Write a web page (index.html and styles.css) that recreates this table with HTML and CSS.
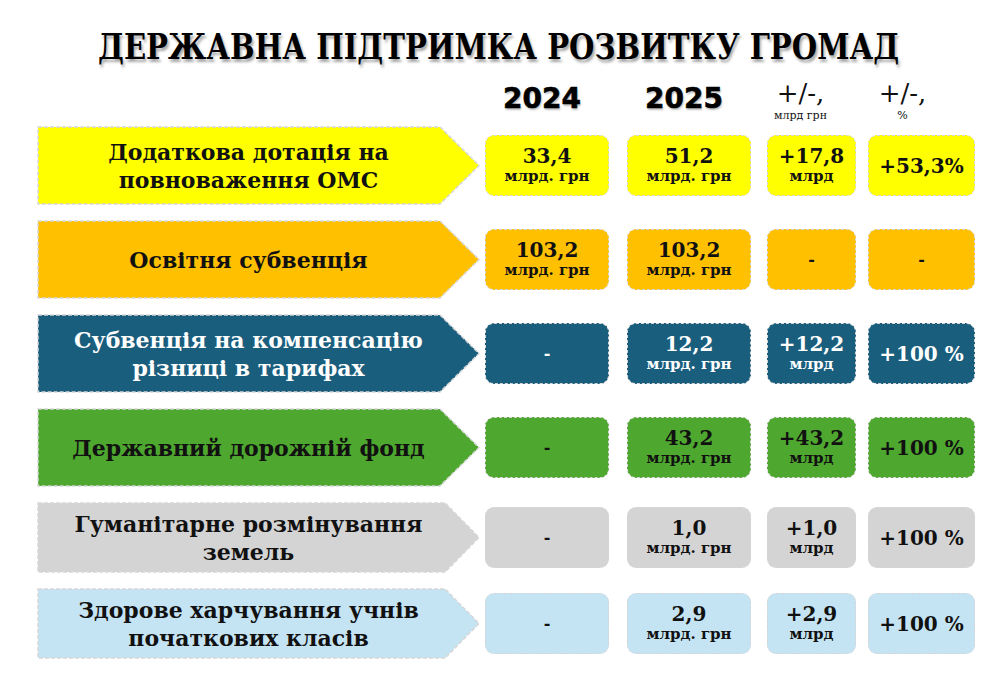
FILE: index.html
```html
<!DOCTYPE html>
<html lang="uk">
<head>
<meta charset="utf-8">
<title>Державна підтримка розвитку громад</title>
<link rel="stylesheet" href="styles.css">
</head>
<body>
<div class="page">
  <h1 class="title"><span class="title-text">ДЕРЖАВНА ПІДТРИМКА РОЗВИТКУ ГРОМАД</span></h1>
  <div class="head">
    <div class="head-spacer"></div>
    <div class="hcell c1 year">2024</div>
    <div class="hcell c2 year">2025</div>
    <div class="hcell c3 delta"><span class="sign">+/-,</span><span class="unit">млрд грн</span></div>
    <div class="hcell c4 delta"><span class="sign">+/-,</span><span class="unit">%</span></div>
  </div>
  <div class="rows">
    <div class="row yellow">
      <div class="arrow"><svg class="arrow-bg" viewBox="0 0 443 79" preserveAspectRatio="none"><polygon points="1,1 403,1 442,39.5 403,78 1,78"/></svg><div class="arrow-text">Додаткова дотація на<br>повноваження ОМС</div></div>
      <div class="box c1"><span class="num">33,4</span><span class="u">млрд. грн</span></div>
      <div class="box c2"><span class="num">51,2</span><span class="u">млрд. грн</span></div>
      <div class="box c3"><span class="num">+17,8</span><span class="u">млрд</span></div>
      <div class="box c4"><span class="num">+53,3%</span></div>
    </div>
    <div class="row orange">
      <div class="arrow"><svg class="arrow-bg" viewBox="0 0 443 79" preserveAspectRatio="none"><polygon points="1,1 403,1 442,39.5 403,78 1,78"/></svg><div class="arrow-text">Освітня субвенція</div></div>
      <div class="box c1"><span class="num">103,2</span><span class="u">млрд. грн</span></div>
      <div class="box c2"><span class="num">103,2</span><span class="u">млрд. грн</span></div>
      <div class="box c3"><span class="dash">-</span></div>
      <div class="box c4"><span class="dash">-</span></div>
    </div>
    <div class="row blue">
      <div class="arrow"><svg class="arrow-bg" viewBox="0 0 443 79" preserveAspectRatio="none"><polygon points="1,1 403,1 442,39.5 403,78 1,78"/></svg><div class="arrow-text">Субвенція на компенсацію<br>різниці в тарифах</div></div>
      <div class="box c1"><span class="dash">-</span></div>
      <div class="box c2"><span class="num">12,2</span><span class="u">млрд. грн</span></div>
      <div class="box c3"><span class="num">+12,2</span><span class="u">млрд</span></div>
      <div class="box c4"><span class="num">+100 %</span></div>
    </div>
    <div class="row green">
      <div class="arrow"><svg class="arrow-bg" viewBox="0 0 443 79" preserveAspectRatio="none"><polygon points="1,1 403,1 442,39.5 403,78 1,78"/></svg><div class="arrow-text">Державний дорожній фонд</div></div>
      <div class="box c1"><span class="dash">-</span></div>
      <div class="box c2"><span class="num">43,2</span><span class="u">млрд. грн</span></div>
      <div class="box c3"><span class="num">+43,2</span><span class="u">млрд</span></div>
      <div class="box c4"><span class="num">+100 %</span></div>
    </div>
    <div class="row gray short">
      <div class="arrow"><svg class="arrow-bg" viewBox="0 0 443 79" preserveAspectRatio="none"><polygon points="1,1 408,1 442,39.5 408,78 1,78"/></svg><div class="arrow-text">Гуманітарне розмінування<br>земель</div></div>
      <div class="box c1"><span class="dash">-</span></div>
      <div class="box c2"><span class="num">1,0</span><span class="u">млрд. грн</span></div>
      <div class="box c3"><span class="num">+1,0</span><span class="u">млрд</span></div>
      <div class="box c4"><span class="num">+100 %</span></div>
    </div>
    <div class="row lightblue short">
      <div class="arrow"><svg class="arrow-bg" viewBox="0 0 443 79" preserveAspectRatio="none"><polygon points="1,1 408,1 442,39.5 408,78 1,78"/></svg><div class="arrow-text">Здорове харчування учнів<br>початкових класів</div></div>
      <div class="box c1"><span class="dash">-</span></div>
      <div class="box c2"><span class="num">2,9</span><span class="u">млрд. грн</span></div>
      <div class="box c3"><span class="num">+2,9</span><span class="u">млрд</span></div>
      <div class="box c4"><span class="num">+100 %</span></div>
    </div>
  </div>
</div>
</body>
</html>
```
FILE: styles.css
```css
* { box-sizing: border-box; }
html, body { margin: 0; padding: 0; background: #ffffff; }
body {
  width: 997px;
  height: 680px;
  overflow: hidden;
  font-family: "DejaVu Serif", "Liberation Serif", serif;
  color: #111111;
}
.page {
  padding-top: 24px;
}
.title {
  margin: 0;
  text-align: center;
  white-space: nowrap;
  font-family: "DejaVu Serif", serif;
  font-weight: bold;
  font-size: 36px;
  line-height: 44px;
  color: #000;
  text-shadow: 2px 3px 3px rgba(0, 0, 0, 0.35);
}
.title-text {
  display: inline-block;
  transform: scaleX(0.81);
  transform-origin: 50% 50%;
}
.head {
  display: flex;
  align-items: flex-start;
  height: 58px;
  padding-top: 12px;
}
.head-spacer { width: 480px; }
.hcell { text-align: center; }
.year {
  font-family: "DejaVu Sans", sans-serif;
  font-weight: bold;
  font-size: 28px;
  line-height: 30px;
  margin-top: 4px;
  color: #000;
  text-shadow: 1px 2px 2px rgba(0, 0, 0, 0.25);
  -webkit-text-stroke: 0.6px #000;
}
.delta {
  display: flex;
  flex-direction: column;
  align-items: center;
  color: #111;
}
.delta .sign {
  font-size: 26px;
  line-height: 26px;
}
.delta .unit {
  font-size: 11px;
  line-height: 14px;
  margin-top: 3px;
}
.head .c1 { width: 124px; }
.head .c2 { margin-left: 18px; width: 124px; }
.head .c3 { margin-left: 10px; width: 89px; }
.head .c4 { margin-left: 4px; width: 107px; }

.rows {
  display: flex;
  flex-direction: column;
  gap: 15px;
}
.row {
  display: flex;
  align-items: center;
  height: 79px;
}
.row.short { height: 71px; }
.arrow {
  display: grid;
  width: 443px;
  height: 100%;
  margin-left: 37px;
}
.arrow-bg, .arrow-text { grid-area: 1 / 1; }
.arrow-bg {
  width: 100%;
  height: 100%;
  display: block;
}
.arrow-bg polygon {
  stroke: #d6d6d6;
  stroke-width: 1.5;
  stroke-dasharray: 4 2;
  vector-effect: non-scaling-stroke;
}
.arrow-text {
  display: flex;
  align-items: center;
  justify-content: center;
  text-align: center;
  padding-right: 20px;
  font-weight: bold;
  font-size: 22px;
  line-height: 28px;
}
.box {
  height: 61px;
  border-radius: 9px;
  border: 1.5px dashed #d6d6d6;
  display: flex;
  flex-direction: column;
  align-items: center;
  justify-content: center;
  font-weight: bold;
  text-align: center;
}
.row > .c1 { width: 124px; margin-left: 5px; }
.row > .c2 { width: 124px; margin-left: 18px; }
.row > .c3 { width: 89px; margin-left: 16px; }
.row > .c4 { width: 107px; margin-left: 12px; }
.num {
  font-size: 20px;
  line-height: 22px;
}
.u {
  font-size: 15px;
  line-height: 19px;
}
.dash {
  font-size: 16px;
  line-height: 20px;
}

.yellow .arrow-bg polygon { fill: #ffff00; }
.yellow .box { background: #ffff00; }
.orange .arrow-bg polygon { fill: #ffc000; }
.orange .box { background: #ffc000; }
.blue .arrow-bg polygon { fill: #1a5e7e; }
.blue .box { background: #1a5e7e; }
.blue .arrow-text, .blue .box { color: #ffffff; }
.green .arrow-bg polygon { fill: #4ea72e; }
.green .box { background: #4ea72e; }
.gray .arrow-bg polygon { fill: #d4d4d4; }
.gray .box { background: #d4d4d4; }
.lightblue .arrow-bg polygon { fill: #c5e4f3; }
.lightblue .box { background: #c5e4f3; }
```
